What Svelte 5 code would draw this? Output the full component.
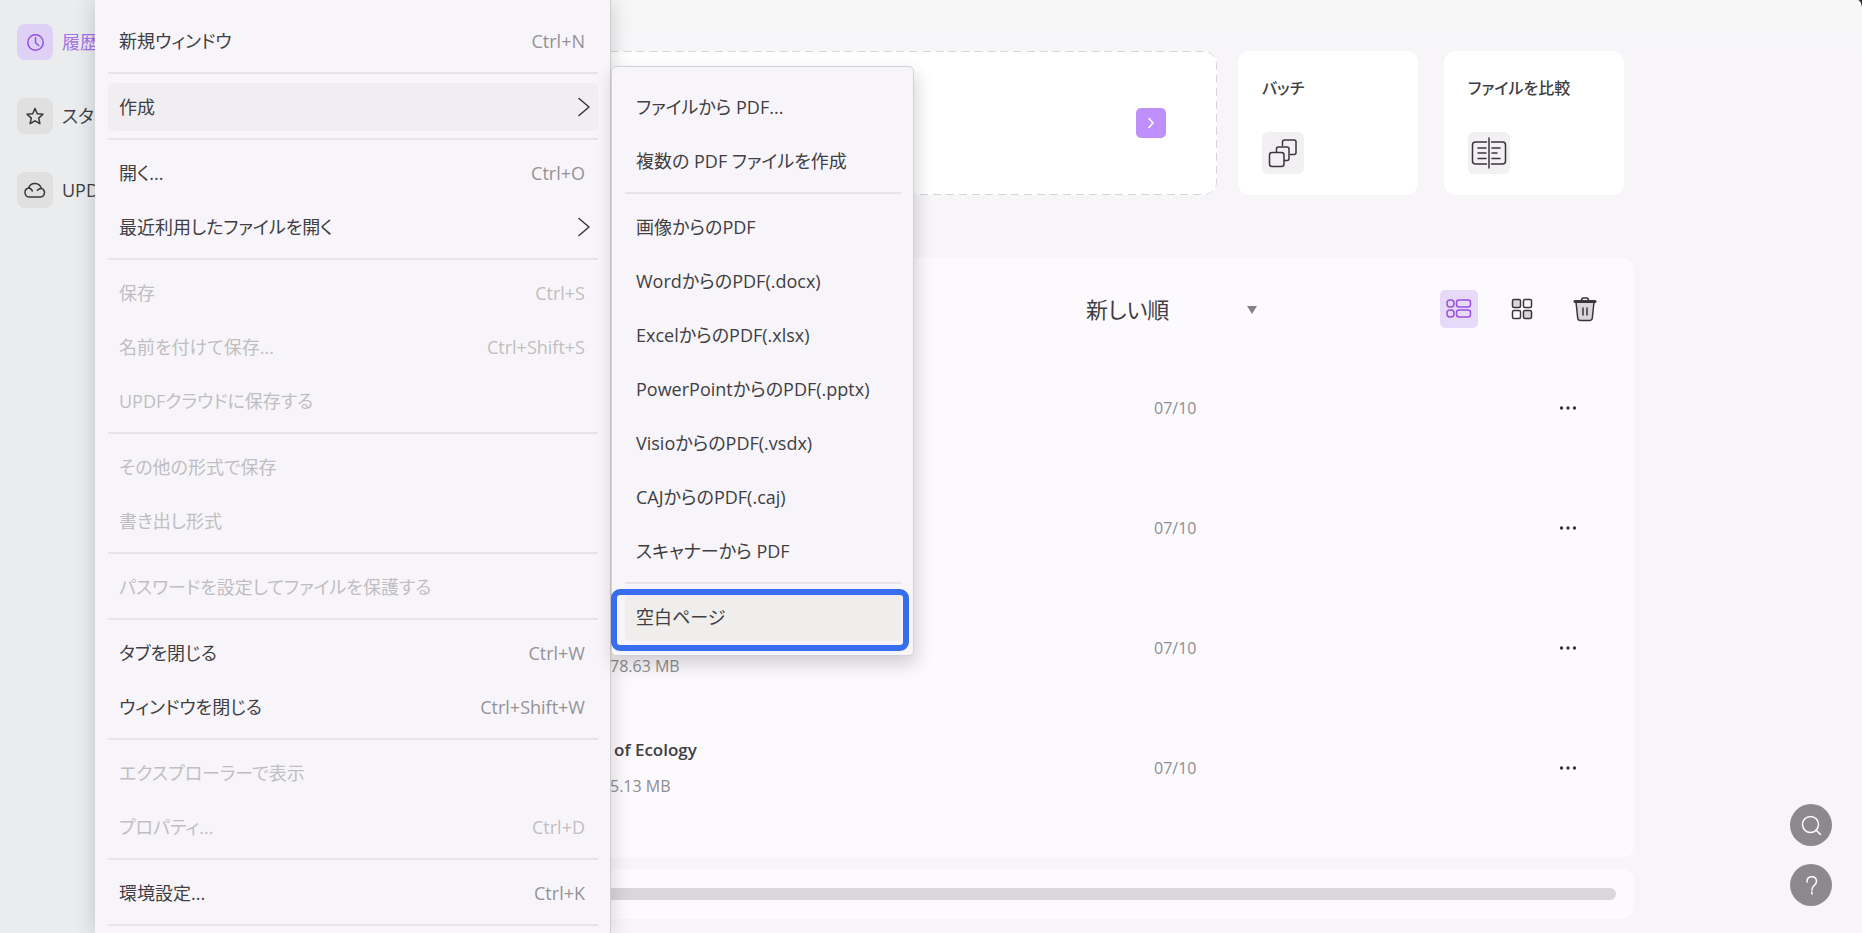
<script>
  const navItems = [
    { icon: 'clock', label: '履歴', active: true },
    { icon: 'star', label: 'スター' },
    { icon: 'cloud', label: 'UPDF' }
  ];

  const menuGroups = [
    [{ label: '新規ウィンドウ', keys: 'Ctrl+N' }],
    [{ label: '作成', arrow: true, open: true }],
    [
      { label: '開く...', keys: 'Ctrl+O' },
      { label: '最近利用したファイルを開く', arrow: true }
    ],
    [
      { label: '保存', keys: 'Ctrl+S', disabled: true },
      { label: '名前を付けて保存...', keys: 'Ctrl+Shift+S', disabled: true },
      { label: 'UPDFクラウドに保存する', disabled: true }
    ],
    [
      { label: 'その他の形式で保存', disabled: true },
      { label: '書き出し形式', disabled: true }
    ],
    [{ label: 'パスワードを設定してファイルを保護する', disabled: true }],
    [
      { label: 'タブを閉じる', keys: 'Ctrl+W' },
      { label: 'ウィンドウを閉じる', keys: 'Ctrl+Shift+W' }
    ],
    [
      { label: 'エクスプローラーで表示', disabled: true },
      { label: 'プロパティ...', keys: 'Ctrl+D', disabled: true }
    ],
    [{ label: '環境設定...', keys: 'Ctrl+K' }]
  ];

  const createGroups = [
    ['ファイルから PDF...', '複数の PDF ファイルを作成'],
    [
      '画像からのPDF',
      'WordからのPDF(.docx)',
      'ExcelからのPDF(.xlsx)',
      'PowerPointからのPDF(.pptx)',
      'VisioからのPDF(.vsdx)',
      'CAJからのPDF(.caj)',
      'スキャナーから PDF'
    ],
    ['空白ページ']
  ];

  const files = [
    { name: '', size: '', date: '07/10' },
    { name: '', size: '', date: '07/10' },
    { name: '', size: '78.63 MB', date: '07/10' },
    { name: 'of Ecology', size: '5.13 MB', date: '07/10' }
  ];
</script>

<div class="window">
  <nav class="sidebar">
    {#each navItems as item}
      <a href="#{item.icon}" class="nav-item" class:active={item.active}>
        <span class="nav-icon">
          <svg width="22" height="22" viewBox="0 0 22 22">
            {#if item.icon === 'clock'}
              <circle cx="11.5" cy="11.5" r="7.7" />
              <path d="M11.5 6.5v5.2l3.2 2.8" />
            {:else if item.icon === 'star'}
              <path d="M11 3.5l2.3 5.2 5.7.6-4.3 3.8 1.2 5.6L11 15.8l-4.9 2.9 1.2-5.6L3 9.3l5.7-.6z" />
            {:else}
              <path d="M5.5 18a4.5 4.5 0 0 1-.9-8.9 6.6 6.6 0 0 1 12.7.3 4.4 4.4 0 0 1-.8 8.6z" />
              <path d="M4.6 9.1q2.7.1 3.7 2.9M17.3 9.4q-2.700 0-3.900 1.900" />
            {/if}
          </svg>
        </span>
        {item.label}
      </a>
    {/each}
  </nav>

  <main class="main">
    <section class="cards">
      <div class="card open-card">
        <svg class="outline"><rect x="0.5" y="0.5" rx="12" /></svg>
        <button class="open-btn" aria-label="開く">
          <svg width="18" height="18" viewBox="0 0 18 18"><path d="M7 4.5l4 4.500-4 4.500" /></svg>
        </button>
      </div>
      <div class="card tool-card">
        <h2>バッチ</h2>
        <span class="tool-icon">
          <svg width="30" height="30" viewBox="0 0 30 30">
            <path d="M14.5 7.5V4q0-2 2-2H26q2 0 2 2v10.5q0 2-2 2h-3.5" />
            <path d="M8.5 14v-3q0-2 2-2H19q2 0 2 2v9.5q0 2-2 2h-2.5" />
            <rect x="1.5" y="14.5" width="14.5" height="14" rx="2.5" />
          </svg>
        </span>
      </div>
      <div class="card tool-card">
        <h2>ファイルを比較</h2>
        <span class="tool-icon">
          <svg width="36" height="32" viewBox="0 0 36 32">
            <path d="M15.5 5H4.5q-3 0-3 3v16q0 3 3 3h11M20.5 5h11q3 0 3 3v16q0 3-3 3h-11" />
            <path d="M18 1v30M7 11h8M7 16h8M7 21.5h8M21 11h8M21 16h5M21 21.5h8" />
          </svg>
        </span>
      </div>
    </section>

    <section class="list">
      <div class="toolbar">
        <div class="sort">
          <select aria-label="並べ替え">
            <option>新しい順</option>
          </select>
          <svg class="caret" width="10" height="8" viewBox="0 0 10 8"><path d="M0 0h10L5 8z" /></svg>
        </div>
        <button class="tool-btn selected" aria-label="リスト表示">
          <svg width="26" height="22" viewBox="0 0 26 22">
            <rect x="1" y="2" width="7" height="7" rx="3" />
            <rect x="10.5" y="2" width="14" height="7" rx="2.5" />
            <rect x="1" y="12" width="7" height="7" rx="3" />
            <rect x="10.5" y="12" width="14" height="7" rx="2.5" />
          </svg>
        </button>
        <button class="tool-btn" aria-label="グリッド表示">
          <svg width="22" height="22" viewBox="0 0 22 22">
            <rect class="tint" x="1.5" y="1.5" width="8" height="8" rx="1.5" />
            <rect x="12.5" y="1.5" width="8" height="8" rx="1.5" />
            <rect x="1.5" y="12.5" width="8" height="8" rx="1.5" />
            <rect class="tint" x="12.5" y="12.5" width="8" height="8" rx="1.5" />
          </svg>
        </button>
        <button class="tool-btn" aria-label="削除">
          <svg width="24" height="26" viewBox="0 0 24 26">
            <path class="tint" d="M3 6l1.7 16q.3 2.5 2.8 2.5h9q2.5 0 2.8-2.5L21 6z" />
            <path d="M8.5 4.5Q8.5 2 10.5 2h3q2 0 2 2.5M10 12v7M14 12v7" />
            <path class="lid" d="M2 5.5h20" />
          </svg>
        </button>
      </div>

      {#each files as file}
        <div class="row">
          <div class="file">
            <strong>{file.name}</strong>
            <span>{file.size}</span>
          </div>
          <span class="date">{file.date}</span>
          <button class="more" aria-label="その他">
            <svg width="18" height="6" viewBox="0 0 18 6">
              <circle cx="2.5" cy="3" r="1.7" />
              <circle cx="9" cy="3" r="1.7" />
              <circle cx="15.5" cy="3" r="1.7" />
            </svg>
          </button>
        </div>
      {/each}
    </section>

    <div class="storage"><div class="bar"></div></div>
  </main>

  <div class="floating">
    <button aria-label="検索">
      <svg width="24" height="24" viewBox="0 0 24 24">
        <circle cx="11.5" cy="11.5" r="8" />
        <path d="M17 17l4.5 4.5" />
      </svg>
    </button>
    <button aria-label="ヘルプ">
      <svg width="24" height="24" viewBox="0 0 24 24">
        <path d="M8 9q0-5.2 4.8-5.2T17.5 8.5q0 2-2.6 4.3-2 1.7-2 4.2M12.9 19v2" />
      </svg>
    </button>
  </div>

  <div class="menu" role="menu">
    {#each menuGroups as group}
      {#each group as item}
        <div class="entry">
          <button class="menu-item" class:open={item.open} role="menuitem" disabled={item.disabled}>
            <span>{item.label}</span>
            {#if item.keys}
              <kbd>{item.keys}</kbd>
            {/if}
            {#if item.arrow}
              <svg class="chevron" width="12" height="20" viewBox="0 0 12 20"><path d="M1 1.5l10 8.5-10 8.5" /></svg>
            {/if}
          </button>
          {#if item.open}
            <div class="submenu" role="menu">
              {#each createGroups as names, i}
                {#if i > 0}
                  <hr />
                {/if}
                {#each names as name}
                  <div class="entry" class:marked={i === 2}>
                    <button class="menu-item" role="menuitem"><span>{name}</span></button>
                  </div>
                {/each}
              {/each}
            </div>
          {/if}
        </div>
      {/each}
      <hr />
    {/each}
  </div>
</div>

<style>
  :global(body) {
    background: #2b2b2b;
  }
  .window {
    position: relative;
    display: flex;
    min-height: 100vh;
    overflow: hidden;
    border-top-right-radius: 4px 9px;
    background: linear-gradient(#f7f7f7, #f7f5f8 60px);
    color: #403e43;
    font-family: "Open Sans", "Noto Sans CJK JP", sans-serif;
    font-feature-settings: "palt";
    font-size: 18px;
    line-height: 26px;
  }
  button, select {
    margin: 0;
    padding: 0;
    border: 0;
    background: none;
    color: inherit;
    font: inherit;
    font-feature-settings: inherit;
    cursor: pointer;
  }
  svg {
    display: block;
    fill: none;
    stroke: #38363b;
    stroke-width: 1.5;
    stroke-linecap: round;
    stroke-linejoin: round;
  }

  .sidebar {
    flex: 0 0 288px;
    box-sizing: border-box;
    display: flex;
    flex-direction: column;
    gap: 38px;
    padding: 24px 17px;
    background: #ebeced;
  }
  .nav-item {
    display: flex;
    align-items: center;
    gap: 9px;
    color: #403e43;
    text-decoration: none;
    white-space: nowrap;
  }
  .nav-icon {
    display: grid;
    place-items: center;
    width: 36px;
    height: 36px;
    border-radius: 8px;
    background: #e0e0e0;
  }
  .active {
    color: #a472ea;
  }
  .active .nav-icon {
    background: #dfd0f6;
  }
  .active svg {
    stroke: #9350e2;
  }

  .main {
    flex: 1;
    padding: 51px 228px 15px 24px;
  }
  .cards {
    display: flex;
    margin: 0 10px 63px 0;
  }
  .card {
    box-sizing: border-box;
    height: 144px;
    border-radius: 12px;
    background: #fff;
  }
  .open-card {
    position: relative;
    flex: 1;
    display: flex;
    align-items: center;
    justify-content: flex-end;
    padding-right: 51px;
  }
  .outline {
    position: absolute;
    inset: 0;
    width: 100%;
    height: 100%;
    stroke: #d6d4d7;
    stroke-width: 1;
    stroke-linecap: butt;
    stroke-dasharray: 8 5;
  }
  .outline rect {
    width: calc(100% - 1px);
    height: calc(100% - 1px);
  }
  .open-btn {
    display: grid;
    place-items: center;
    width: 30px;
    height: 30px;
    border-radius: 5px;
    background: #bf90fb;
  }
  .open-btn svg {
    stroke: #fff;
  }
  .tool-card {
    width: 180px;
    margin-left: 21px;
    padding: 24px;
  }
  .tool-card + .tool-card {
    margin-left: 26px;
  }
  .tool-card h2 {
    margin: 0 0 31px;
    font-size: 16px;
    font-weight: 500;
    line-height: 26px;
    white-space: nowrap;
  }
  .tool-icon {
    display: grid;
    place-items: center;
    width: 42px;
    height: 42px;
    border-radius: 6px;
    background: #f2f0f3;
  }

  .list {
    padding-bottom: 30px;
    border-radius: 12px;
    background: #fcfafd;
  }
  .toolbar {
    display: flex;
    align-items: center;
    justify-content: flex-end;
    gap: 25px;
    padding: 32px 30px 20px;
  }
  .sort {
    position: relative;
    width: 173px;
    margin-right: 156px;
  }
  .sort select {
    appearance: none;
    width: 100%;
    font-size: 22px;
    line-height: 32px;
  }
  .caret {
    position: absolute;
    top: 13px;
    right: 2px;
    pointer-events: none;
    fill: #858387;
    stroke: none;
  }
  .tool-btn {
    display: grid;
    place-items: center;
    width: 38px;
    height: 38px;
    border-radius: 5px;
  }
  .selected {
    background: #e7daf9;
  }
  .selected svg {
    stroke: #9850dd;
  }
  .tint {
    fill: #d8d6d9;
  }
  .lid {
    stroke-width: 3;
  }
  .row {
    display: grid;
    grid-template-columns: 1fr 394px 40px;
    align-items: center;
    height: 120px;
    padding: 0 46px 0 298px;
  }
  .file {
    display: grid;
    grid-template-rows: 36px 36px;
    align-items: center;
  }
  .file strong {
    padding-left: 4px;
    font-size: 17px;
    font-weight: 600;
  }
  .file span, .date {
    color: #8f8d91;
    font-size: 16px;
  }
  .more {
    display: grid;
    place-items: center;
    height: 32px;
  }
  .more svg {
    fill: #38363b;
    stroke: none;
  }
  .storage {
    margin-top: 11px;
    padding: 19px 18px;
    border-radius: 12px;
    background: #fcfafd;
  }
  .bar {
    height: 12px;
    border-radius: 6px;
    background: #d9d7da;
  }

  .floating {
    position: absolute;
    right: 30px;
    bottom: 28px;
    display: grid;
    gap: 18px;
  }
  .floating button {
    display: grid;
    place-items: center;
    width: 42px;
    height: 42px;
    border-radius: 50%;
    background: #8c898d;
  }
  .floating svg {
    stroke: #fff;
  }

  .menu {
    position: absolute;
    top: 0;
    bottom: 0;
    left: 95px;
    box-sizing: border-box;
    width: 516px;
    padding: 14px 12px 0 13px;
    border-right: 1px solid #cfcdd0;
    background: #f7f5f9;
    box-shadow: 0 0 20px rgba(0, 0, 0, 0.18);
  }
  .entry {
    position: relative;
    padding: 3px 0;
  }
  .menu-item {
    box-sizing: border-box;
    display: flex;
    align-items: center;
    justify-content: space-between;
    width: 100%;
    height: 48px;
    padding: 0 13px 0 11px;
    border-radius: 5px;
    text-align: left;
    white-space: nowrap;
  }
  .menu-item.open {
    background: #f0eef1;
  }
  .menu-item:disabled {
    color: #c0bec1;
  }
  kbd {
    color: #949296;
    font: inherit;
  }
  :disabled kbd {
    color: #c0bec1;
  }
  .chevron {
    margin-right: -5px;
  }
  hr {
    height: 2px;
    margin: 4px 0 6px;
    border: 0;
    background: #e6e4e7;
  }
  .submenu {
    position: absolute;
    top: -14px;
    left: 503px;
    z-index: 1;
    box-sizing: border-box;
    width: 303px;
    padding: 13px 12px 11px 13px;
    border: 1px solid #d4d2d5;
    border-radius: 5px;
    background: #f7f5f9;
    box-shadow: 2px 8px 18px rgba(0, 0, 0, 0.18);
  }
  .marked .menu-item {
    background: #efeeed;
  }
  .marked::after {
    content: "";
    position: absolute;
    inset: -1px -8px -7px -14px;
    border: 6px solid #376ef0;
    border-radius: 9px;
    pointer-events: none;
  }
</style>
